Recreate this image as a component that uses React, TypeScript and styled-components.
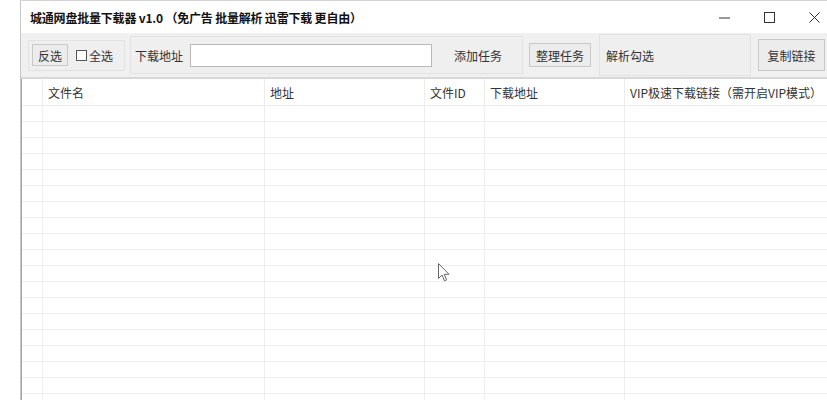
import React from 'react';
import styled, { createGlobalStyle } from 'styled-components';

const GlobalStyle = createGlobalStyle`
  html, body {
    margin: 0;
    padding: 0;
    background: #fff;
  }
  body {
    font-family: "Noto Sans CJK SC", "Liberation Sans", sans-serif;
    font-size: 12px;
    color: #222;
  }
  #root {
    width: 827px;
    height: 400px;
    overflow: hidden;
  }
`;

const Window = styled.div`
  position: relative;
  margin-left: 20px;
  width: 816px;
  height: 400px;
  border-left: 1px solid #c6c6c6;
  border-top: 1px solid #d4d4d4;
  background: #fff;
`;

const TitleBar = styled.div`
  display: flex;
  align-items: center;
  height: 32px;
  padding-left: 9px;
`;

const Title = styled.div`
  flex: 1;
  font-weight: bold;
  font-size: 12px;
  color: #111;
  letter-spacing: -0.2px;
`;

const Controls = styled.div`
  display: flex;
  height: 100%;
`;

const ControlButton = styled.div`
  width: 45px;
  height: 100%;
  display: flex;
  align-items: center;
  justify-content: center;
  color: #222;
`;

const Toolbar = styled.div`
  display: flex;
  align-items: center;
  height: 44px;
  background: #f0f0f0;
  border-bottom: 2px solid #d8d8d8;
`;

const Panel = styled.div<{ $h: number; $w?: number; $ml: number; $pl: number }>`
  display: flex;
  align-items: center;
  height: ${p => p.$h}px;
  ${p => (p.$w ? `width: ${p.$w}px;` : '')}
  margin-left: ${p => p.$ml}px;
  padding-left: ${p => p.$pl}px;
  box-sizing: border-box;
  border: 1px solid #e2e2e2;
  background: #efefef;
`;

const Button = styled.div<{ $w: number; $h: number; $ml: number }>`
  display: flex;
  align-items: center;
  justify-content: center;
  width: ${p => p.$w}px;
  height: ${p => p.$h}px;
  margin-left: ${p => p.$ml}px;
  box-sizing: border-box;
  border: 1px solid #c9c9c9;
  background: #ececec;
  color: #333;
  flex-shrink: 0;
`;

const Check = styled.span`
  display: inline-block;
  width: 11px;
  height: 11px;
  box-sizing: border-box;
  border: 1px solid #555;
  background: #fff;
  margin: 0 2px 0 8px;
`;

const Label = styled.span<{ $ml?: number }>`
  margin-left: ${p => p.$ml ?? 0}px;
  color: #333;
  white-space: nowrap;
`;

const Input = styled.div`
  width: 242px;
  height: 23px;
  margin-left: 7px;
  box-sizing: border-box;
  border: 1px solid #b9b9b9;
  background: #fff;
`;

const cols = '21px 222px 160px 60px 140px 1fr';

const Table = styled.div`
  position: relative;
  border-left: 1px solid #a4a4a4;
  height: 400px;
`;

const HeaderRow = styled.div`
  display: grid;
  grid-template-columns: ${cols};
  height: 26px;
  border-bottom: 1px solid #ececec;
`;

const HeadCell = styled.div`
  display: flex;
  align-items: center;
  padding-left: 5px;
  border-right: 1px solid #ececec;
  color: #333;
  white-space: nowrap;
  overflow: hidden;
`;

const Row = styled.div`
  display: grid;
  grid-template-columns: ${cols};
  height: 15px;
  border-bottom: 1px solid #eeeeee;
`;

const Cell = styled.div`
  border-right: 1px solid #eeeeee;
`;

const Cursor = styled.svg`
  position: absolute;
  left: 416px;
  top: 184px;
`;

const headers = ['', '文件名', '地址', '文件ID', '下载地址', 'VIP极速下载链接（需开启VIP模式）'];

export default function App() {
  return (
    <>
      <GlobalStyle />
      <Window>
        <TitleBar>
          <Title>城通网盘批量下载器 v1.0 （免广告 批量解析 迅雷下载 更自由）</Title>
          <Controls>
            <ControlButton>
              <svg width="11" height="11" viewBox="0 0 11 11">
                <line x1="0" y1="6" x2="11" y2="6" stroke="#333" strokeWidth="1" />
              </svg>
            </ControlButton>
            <ControlButton>
              <svg width="11" height="11" viewBox="0 0 11 11">
                <rect x="0.5" y="0.5" width="10" height="10" fill="none" stroke="#333" strokeWidth="1" />
              </svg>
            </ControlButton>
            <ControlButton>
              <svg width="11" height="11" viewBox="0 0 11 11">
                <path d="M0.5 0.5 L10.5 10.5 M10.5 0.5 L0.5 10.5" stroke="#333" strokeWidth="1" />
              </svg>
            </ControlButton>
          </Controls>
        </TitleBar>
        <Toolbar>
          <Panel $h={31} $w={97} $ml={7} $pl={3}>
            <Button $w={36} $h={22} $ml={0}>反选</Button>
            <Check />
            <Label>全选</Label>
          </Panel>
          <Panel $h={38} $w={393} $ml={5} $pl={4}>
            <Label>下载地址</Label>
            <Input />
            <Label $ml={22}>添加任务</Label>
          </Panel>
          <Button $w={62} $h={24} $ml={6}>整理任务</Button>
          <Panel $h={42} $w={152} $ml={8} $pl={6}>
            <Label>解析勾选</Label>
          </Panel>
          <Button $w={67} $h={32} $ml={7}>复制链接</Button>
        </Toolbar>
        <Table>
          <HeaderRow>
            {headers.map((h, i) => (
              <HeadCell key={i}>{h}</HeadCell>
            ))}
          </HeaderRow>
          {Array.from({ length: 19 }).map((_, r) => (
            <Row key={r}>
              {headers.map((_, c) => (
                <Cell key={c} />
              ))}
            </Row>
          ))}
          <Cursor width="12" height="19" viewBox="0 0 12 19">
            <path
              d="M0.5 0.5 L0.5 15.5 L4 12 L6.5 17.8 L8.6 16.9 L6.2 11.3 L11 11.3 Z"
              fill="#fff"
              stroke="#666"
              strokeWidth="1"
              strokeLinejoin="round"
            />
          </Cursor>
        </Table>
      </Window>
    </>
  );
}
